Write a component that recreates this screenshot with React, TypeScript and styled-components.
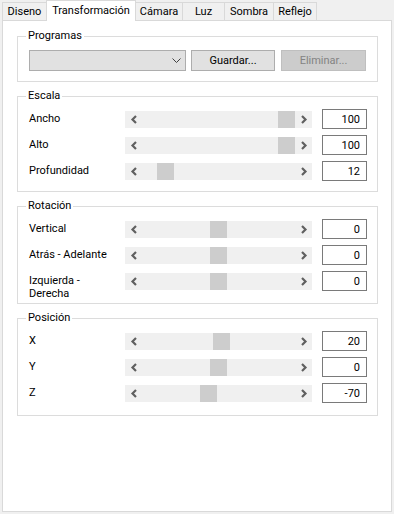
import React from "react";
import styled, { createGlobalStyle } from "styled-components";

const FONT = `"Roboto", "Noto Sans", sans-serif`;

const GlobalStyle = createGlobalStyle`
  html, body {
    margin: 0;
    padding: 0;
    background: #f0f0f0;
  }
  body {
    font-family: ${FONT};
    font-size: 11px;
    color: #000;
  }
  * { box-sizing: border-box; }
`;

const Window = styled.div`
  width: 394px;
  height: 514px;
  display: flex;
  flex-direction: column;
  background: #f0f0f0;
  overflow: hidden;
`;

const TabStrip = styled.div`
  height: 20px;
  display: flex;
  align-items: flex-end;
  padding-left: 2px;
  position: relative;
  z-index: 2;
`;

const Tab = styled.div<{ $w: number; $active?: boolean }>`
  width: ${(p) => p.$w}px;
  height: ${(p) => (p.$active ? 21 : 18)}px;
  margin-right: -1px;
  margin-bottom: ${(p) => (p.$active ? -1 : 0)}px;
  border: 1px solid #d9d9d9;
  border-bottom: none;
  background: ${(p) => (p.$active ? "#ffffff" : "#f0f0f0")};
  position: relative;
  z-index: ${(p) => (p.$active ? 2 : 1)};
  display: flex;
  align-items: ${(p) => (p.$active ? "flex-start" : "center")};
  padding-top: ${(p) => (p.$active ? 2 : 0)}px;
  justify-content: center;
  line-height: 16px;
  white-space: nowrap;
`;

const Panel = styled.div`
  flex: 1;
  margin: 0 2px 2px 2px;
  border: 1px solid #d9d9d9;
  background: #ffffff;
  padding: 15px 13px 0 14px;
  display: flex;
  flex-direction: column;
  gap: 14px;
`;

const Group = styled.div<{ $h: number }>`
  position: relative;
  height: ${(p) => p.$h}px;
  border: 1px solid #dcdcdc;
  padding: 12px 10px 0 11px;
  display: flex;
  flex-direction: column;
  gap: 6px;
`;

const ProgramGroup = styled(Group)`
  padding: 13px 11px 0 11px;
  flex-direction: row;
  gap: 0;
`;

const Legend = styled.span`
  position: absolute;
  top: -9px;
  left: 8px;
  padding: 0 2px;
  background: #ffffff;
  line-height: 16px;
`;

const Combo = styled.div`
  width: 157px;
  height: 21px;
  border: 1px solid #adadad;
  background: #e1e1e1;
  display: flex;
  align-items: center;
  justify-content: flex-end;
  padding-right: 4px;
`;

const Button = styled.div<{ $w: number; $ml: number; $disabled?: boolean }>`
  width: ${(p) => p.$w}px;
  height: 21px;
  margin-left: ${(p) => p.$ml}px;
  border: 1px solid ${(p) => (p.$disabled ? "#bfbfbf" : "#adadad")};
  background: ${(p) => (p.$disabled ? "#cccccc" : "#e1e1e1")};
  color: ${(p) => (p.$disabled ? "#838383" : "#000")};
  display: flex;
  align-items: center;
  justify-content: center;
  line-height: 16px;
`;

const Row = styled.div`
  height: 20px;
  display: flex;
  align-items: center;
`;

const Label = styled.div`
  width: 84px;
  margin-right: 12px;
  align-self: flex-start;
  padding-top: 3px;
  line-height: 13px;
  flex: none;
`;

const Track = styled.div`
  width: 187px;
  height: 17px;
  background: #f0f0f0;
  display: flex;
  flex: none;
`;

const ArrowBtn = styled.div`
  width: 17px;
  height: 17px;
  display: flex;
  align-items: center;
  justify-content: center;
  flex: none;
`;

const Trough = styled.div`
  flex: 1;
  position: relative;
`;

const Thumb = styled.div`
  position: absolute;
  top: 0;
  width: 17px;
  height: 17px;
  background: #cdcdcd;
`;

const ValueBox = styled.input`
  width: 45px;
  height: 20px;
  margin: 0 0 0 10px;
  border: 1px solid #7a7a7a;
  background: #ffffff;
  padding: 0 6px 0 2px;
  text-align: right;
  font-family: ${FONT};
  font-size: 11px;
  color: #000;
  outline: none;
  flex: none;
`;

const tabs = [
  { label: "Diseno", w: 45 },
  { label: "Transformación", w: 90, active: true },
  { label: "Cámara", w: 48 },
  { label: "Luz", w: 43 },
  { label: "Sombra", w: 50 },
  { label: "Reflejo", w: 44 },
];

type Item = { label: string; value: number; min: number; max: number };

const groups: { title: string; h: number; items: Item[] }[] = [
  {
    title: "Escala",
    h: 96,
    items: [
      { label: "Ancho", value: 100, min: 1, max: 100 },
      { label: "Alto", value: 100, min: 1, max: 100 },
      { label: "Profundidad", value: 12, min: 1, max: 100 },
    ],
  },
  {
    title: "Rotación",
    h: 98,
    items: [
      { label: "Vertical", value: 0, min: -180, max: 180 },
      { label: "Atrás - Adelante", value: 0, min: -180, max: 180 },
      { label: "Izquierda - Derecha", value: 0, min: -180, max: 180 },
    ],
  },
  {
    title: "Posición",
    h: 98,
    items: [
      { label: "X", value: 20, min: -500, max: 500 },
      { label: "Y", value: 0, min: -500, max: 500 },
      { label: "Z", value: -70, min: -500, max: 500 },
    ],
  },
];

const TRAVEL = 136;

const Chevron = ({ dir }: { dir: "left" | "right" }) => (
  <svg width="8" height="9" viewBox="0 0 8 9">
    <polyline
      points={dir === "left" ? "6,1 2.5,4.5 6,8" : "2,1 5.5,4.5 2,8"}
      fill="none"
      stroke="#606060"
      strokeWidth="2.2"
    />
  </svg>
);

const ComboArrow = () => (
  <svg width="9" height="6" viewBox="0 0 9 6">
    <polyline points="0.5,0.5 4.5,4.5 8.5,0.5" fill="none" stroke="#404040" strokeWidth="1" />
  </svg>
);

const SliderRow = ({ item }: { item: Item }) => {
  const left = Math.round(((item.value - item.min) / (item.max - item.min)) * TRAVEL);
  return (
    <Row>
      <Label>{item.label}</Label>
      <Track>
        <ArrowBtn>
          <Chevron dir="left" />
        </ArrowBtn>
        <Trough>
          <Thumb style={{ left }} />
        </Trough>
        <ArrowBtn>
          <Chevron dir="right" />
        </ArrowBtn>
      </Track>
      <ValueBox readOnly value={String(item.value)} />
    </Row>
  );
};

export default function App() {
  return (
    <>
      <GlobalStyle />
      <Window>
        <TabStrip>
          {tabs.map((t) => (
            <Tab key={t.label} $w={t.w} $active={t.active}>
              {t.label}
            </Tab>
          ))}
        </TabStrip>
        <Panel>
          <ProgramGroup $h={46}>
            <Legend>Programas</Legend>
            <Combo>
              <ComboArrow />
            </Combo>
            <Button $w={84} $ml={5}>Guardar...</Button>
            <Button $w={85} $ml={6} $disabled>
              Eliminar...
            </Button>
          </ProgramGroup>
          {groups.map((g) => (
            <Group key={g.title} $h={g.h}>
              <Legend>{g.title}</Legend>
              {g.items.map((it) => (
                <SliderRow key={it.label} item={it} />
              ))}
            </Group>
          ))}
        </Panel>
      </Window>
    </>
  );
}
